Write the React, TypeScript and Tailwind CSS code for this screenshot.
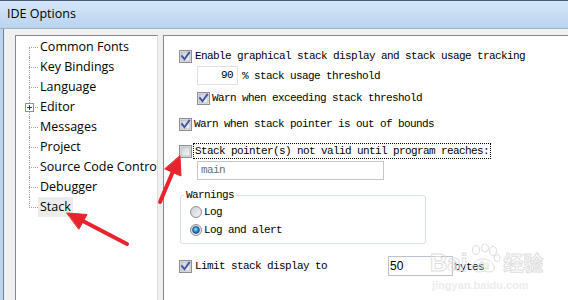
import React, { useId } from "react";

function Checkbox({ checked = false }: { checked?: boolean }) {
  const id = useId().replace(/:/g, "");
  return (
    <svg width="13" height="13" viewBox="0 0 13 13" className="shrink-0">
      <defs>
        <linearGradient id={`g${id}`} x1="0" y1="0" x2="1" y2="1">
          <stop offset="0" stopColor="#cbcfd5" />
          <stop offset="1" stopColor="#f6f6f6" />
        </linearGradient>
      </defs>
      <rect x="0.5" y="0.5" width="12" height="12" fill="#f4f4f4" stroke="#8e8f8f" />
      <rect x="2" y="2" width="9" height="9" fill={`url(#g${id})`} stroke="#b4b8bd" strokeWidth="1" />
      {checked && (
        <path d="M3 6.2 L5.4 9.2 L10.2 2.6" fill="none" stroke="#3d56a3" strokeWidth="1.9" strokeLinecap="square" />
      )}
    </svg>
  );
}

function Radio({ checked = false }: { checked?: boolean }) {
  const id = useId().replace(/:/g, "");
  return (
    <svg width="12" height="12" viewBox="0 0 12 12" className="shrink-0">
      <defs>
        <linearGradient id={`r${id}`} x1="0" y1="0" x2="1" y2="1">
          <stop offset="0" stopColor="#c9ccd1" />
          <stop offset="1" stopColor="#f7f7f7" />
        </linearGradient>
        <radialGradient id={`d${id}`} cx="0.45" cy="0.4" r="0.6">
          <stop offset="0" stopColor="#9fe6ff" />
          <stop offset="0.5" stopColor="#2d98d8" />
          <stop offset="1" stopColor="#0b4f8f" />
        </radialGradient>
      </defs>
      <circle cx="6" cy="6" r="5.5" fill={`url(#r${id})`} stroke="#8e8f8f" />
      {checked && <circle cx="6" cy="6" r="3.4" fill={`url(#d${id})`} stroke="#1f4d80" strokeWidth="0.8" />}
    </svg>
  );
}

function TreeRow({
  label,
  first,
  last,
  plus,
  selected,
}: {
  label: string;
  first?: boolean;
  last?: boolean;
  plus?: boolean;
  selected?: boolean;
}) {
  const vert = first ? "top-[10px] bottom-0" : last ? "top-0 h-[11px]" : "top-0 bottom-0";
  return (
    <div className="flex h-[20px] items-center">
      <div className="relative w-[22px] h-full shrink-0">
        <div className={`absolute left-[13px] border-l border-dotted border-[#a0a0a0] ${vert}`} />
        <div className="absolute left-[13px] top-[10px] w-[9px] border-t border-dotted border-[#a0a0a0]" />
        {plus && (
          <div className="absolute left-[9px] top-[6px] w-[9px] h-[9px] border border-[#919191] bg-white">
            <div className="absolute left-[1px] top-[3px] w-[5px] h-[1px] bg-[#1d3f7c]" />
            <div className="absolute left-[3px] top-[1px] w-[1px] h-[5px] bg-[#1d3f7c]" />
          </div>
        )}
      </div>
      <span
        className={`px-[2px] text-[12.5px] leading-[20px] whitespace-nowrap text-black ${selected ? "bg-[#ececec]" : ""}`}
      >
        {label}
      </span>
    </div>
  );
}

export default function App() {
  return (
    <div className="relative w-[568px] h-[300px] overflow-hidden bg-[#f0f0f0] font-['Open_Sans',sans-serif]">
      <div className="h-[29px] border-t border-b border-[#4a5a70] border-b-[#9fb0c4] bg-gradient-to-b from-[#d5e7fa] to-[#bad3ef] flex items-center pl-[7px] text-[12.5px] text-black">
        IDE Options
      </div>
      <div className="flex h-[271px]">
        <div className="w-[3px] bg-[#bcd4ee] border-r border-[#6f7f94] box-content shrink-0" />
        <div className="flex-1 flex pt-[6px] pl-[11px]">
          <div className="w-[143px] shrink-0 border-l border-t border-r border-[#828790] border-r-[#dcdcdc] bg-white overflow-hidden pt-[1px]">
            <TreeRow label="Common Fonts" first />
            <TreeRow label="Key Bindings" />
            <TreeRow label="Language" />
            <TreeRow label="Editor" plus />
            <TreeRow label="Messages" />
            <TreeRow label="Project" />
            <TreeRow label="Source Code Control" />
            <TreeRow label="Debugger" />
            <TreeRow label="Stack" last selected />
          </div>
          <div className="ml-[5px] flex-1 border-l border-t border-[#828790] bg-white pl-[15px] pt-[10px] flex flex-col text-black font-['Liberation_Mono',monospace] text-[11px] tracking-[-0.6px] leading-[14px] whitespace-nowrap">
            <div className="flex items-center h-[20px]">
              <Checkbox checked />
              <span className="ml-[3px]">Enable graphical stack display and stack usage tracking</span>
            </div>
            <div className="flex items-center h-[19px] ml-[18px]">
              <div className="w-[41px] h-[19px] border border-[#dde2e8] text-right pr-[4px] leading-[17px]">90</div>
              <span className="ml-[4px]">% stack usage threshold</span>
            </div>
            <div className="flex items-center h-[26px] ml-[18px]">
              <Checkbox checked />
              <span className="ml-[2px]">Warn when exceeding stack threshold</span>
            </div>
            <div className="flex items-center h-[26px]">
              <Checkbox checked />
              <span className="ml-[2px]">Warn when stack pointer is out of bounds</span>
            </div>
            <div className="flex items-center h-[18px] mt-[5px]">
              <Checkbox />
              <span className="ml-[1px] border border-dotted border-black px-[1px] leading-[14px]">
                Stack pointer(s) not valid until program reaches:
              </span>
            </div>
            <div className="ml-[18px] mt-[1px] w-[187px] h-[19px] border border-[#c3c7cc] text-[#707070] pl-[3px] leading-[17px]">
              main
            </div>
            <fieldset className="ml-[1px] mt-[9px] w-[246px] border border-[#d5dfe5] rounded-[3px] pl-[9px] pb-[4px]">
              <legend className="ml-[-6px] px-[2px] leading-[12px]">Warnings</legend>
              <div className="flex items-center h-[18px] mt-[2px]">
                <Radio />
                <span className="ml-[2px]">Log</span>
              </div>
              <div className="flex items-center h-[18px]">
                <Radio checked />
                <span className="ml-[2px]">Log and alert</span>
              </div>
            </fieldset>
            <div className="flex items-center h-[24px] mt-[10px]">
              <Checkbox checked />
              <span className="ml-[3px] w-[193px]">Limit stack display to</span>
              <div className="w-[65px] h-[20px] border border-[#bcc2c9] font-['Liberation_Sans',sans-serif] text-[12px] tracking-normal pl-[1px] leading-[18px]">
                50
              </div>
              <span className="ml-[1px] mt-[2px]">bytes</span>
            </div>
          </div>
        </div>
      </div>

      {/* watermark */}
      <div className="absolute left-[430px] top-[244px] flex items-end pointer-events-none select-none">
        <span className="font-['Liberation_Sans',sans-serif] font-bold text-[24px] leading-[26px] text-white/0 [-webkit-text-stroke:1px_#dedede]">
          Bai
        </span>
        <svg width="34" height="30" viewBox="0 0 34 30" className="mb-[2px]">
          <g fill="none" stroke="#dedede" strokeWidth="1">
            <ellipse cx="9" cy="6" rx="3.5" ry="4.5" />
            <ellipse cx="18" cy="4" rx="3.5" ry="4" />
            <ellipse cx="26" cy="7" rx="3.5" ry="4.5" />
            <ellipse cx="30" cy="14" rx="3" ry="3.5" />
            <path d="M6 22 C8 13 22 12 27 22 C29 28 22 29 17 27 C12 29 4 28 6 22 Z" />
          </g>
          <text x="10" y="25" fontSize="10" fontWeight="bold" fill="none" stroke="#dedede" strokeWidth="0.6" fontFamily="Liberation Sans">
            du
          </text>
        </svg>
        <span className="ml-[2px] font-['Noto_Sans_CJK_SC',sans-serif] font-bold text-[20px] leading-[26px] text-white/0 [-webkit-text-stroke:1px_#dedede]">
          经验
        </span>
      </div>
      <div className="absolute left-[432px] top-[279px] font-['Liberation_Sans',sans-serif] font-bold text-[11px] leading-[12px] text-[#ececec] pointer-events-none">
        jingyan.baidu.com
      </div>

      {/* red annotation arrows */}
      <svg className="absolute left-0 top-0 pointer-events-none" width="568" height="300" viewBox="0 0 568 300">
        <g fill="#e8232b" stroke="#e8232b" strokeLinecap="round" strokeLinejoin="round">
          <line x1="127" y1="244" x2="81" y2="220" strokeWidth="4" />
          <polygon points="67,213 87,214.5 79,229" strokeWidth="1" />
          <line x1="160" y1="202" x2="174" y2="169" strokeWidth="4" />
          <polygon points="180,156 181,176 165,169" strokeWidth="1" />
        </g>
      </svg>
    </div>
  );
}
